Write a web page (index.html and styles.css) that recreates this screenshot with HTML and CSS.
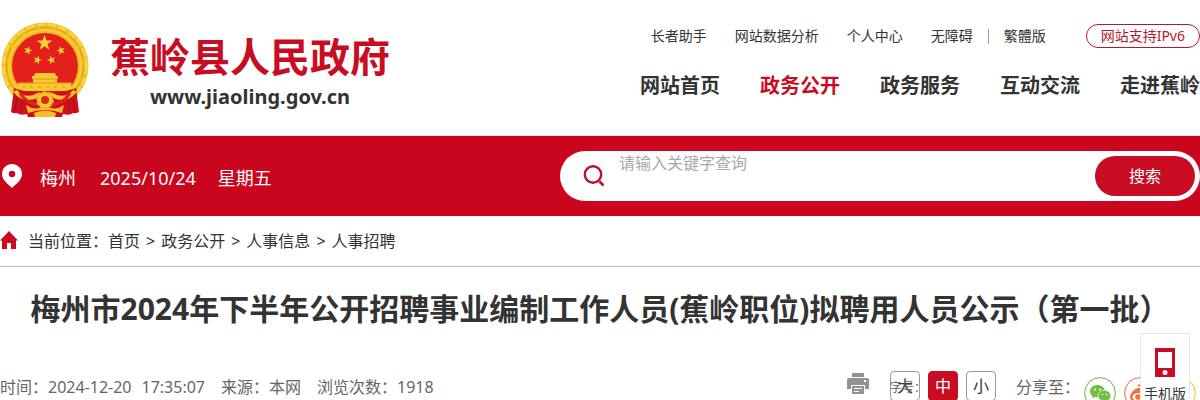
FILE: index.html
```html
<!DOCTYPE html>
<html lang="zh-CN">
<head>
<meta charset="utf-8">
<meta name="viewport" content="width=device-width, initial-scale=1">
<title>蕉岭县人民政府</title>
<link rel="stylesheet" href="styles.css">
</head>
<body>
<header class="header">
  <a class="brand" href="#">
    <svg class="emblem" viewBox="0 0 90 98" aria-hidden="true">
      <defs>
        <path id="star" d="M0-10 2.4-3.1 9.5-3.1 3.8 1.2 5.9 8.1 0 4-5.9 8.1-3.8 1.2-9.5-3.1-2.4-3.1Z"/>
      </defs>
      <circle cx="45" cy="45" r="43.500" fill="#f0bb22"/>
      <circle cx="45" cy="45" r="41.500" fill="none" stroke="#f9d743" stroke-width="2.500" stroke-dasharray="9 2"/>
      <circle cx="45" cy="45" r="36" fill="none" stroke="#f7cf35" stroke-width="2"/>
      <circle cx="45" cy="45" r="38.500" fill="none" stroke="#d99f1c" stroke-width="1" stroke-dasharray="12 4"/>
      <circle cx="45" cy="45" r="33" fill="#e3201b"/>
      <g fill="#fbd334">
        <use href="#star" transform="translate(44.500 22) scale(.82)"/>
        <use href="#star" transform="translate(28 29.500) scale(.45) rotate(15)"/>
        <use href="#star" transform="translate(61 29.500) scale(.45) rotate(-15)"/>
        <use href="#star" transform="translate(37.500 39) scale(.45) rotate(20)"/>
        <use href="#star" transform="translate(51.500 39) scale(.45) rotate(-20)"/>
      </g>
      <path d="M35 52h20l1 3h2v3h-1v4h9l5 0 2 8H16l2-8h15v-4h-1v-3h2Z" fill="#f7c832"/>
      <path d="M33 58h24M18 62h54" stroke="#dc9b1b"/>
      <path d="M22 66h46" stroke="#dc9b1b" stroke-dasharray="3 5"/>
      <path d="M14 67Q30 73 45 70Q60 73 76 67L79 91Q76 93 73 92Q70 95 63 93L62 96H28L27 93Q20 95 17 92Q14 93 11 91Z" fill="#cf111e"/>
      <path d="M15 70Q25 82 40 73M75 70Q65 82 50 73" fill="none" stroke="#f8c72e" stroke-width="4"/>
      <path d="M20 72Q28 85 45 84Q62 85 70 72" fill="none" stroke="#e3201b" stroke-width="3"/>
      <path d="M26 84Q36 91 45 84Q54 91 64 84L62 92Q45 86 28 92Z" fill="#f5bd27"/>
      <circle cx="45" cy="79" r="8" fill="#f8c72e" stroke="#e9ae24" stroke-width="2" stroke-dasharray="3 2"/>
      <circle cx="45" cy="79" r="4" fill="#db281c"/>
      <path d="M34 92Q45 87 56 92L55 96H35Z" fill="#f5bd27"/>
      <path d="M17 77 15 90M22 80 21 91M68 80 69 91M73 77 75 90" stroke="#a30d18"/>
    </svg>
    <span class="brand-text">
      <strong class="brand-name">蕉岭县人民政府</strong>
      <span class="brand-url">www.jiaoling.gov.cn</span>
    </span>
  </a>
  <div class="header-nav">
    <nav class="tools" aria-label="辅助功能">
      <a href="#">长者助手</a>
      <a href="#">网站数据分析</a>
      <a href="#">个人中心</a>
      <span class="lang"><a href="#">无障碍</a><i class="divider"></i><a href="#">繁體版</a></span>
      <a class="ipv6" href="#">网站支持IPv6</a>
    </nav>
    <nav class="menu" aria-label="主导航">
      <a href="#">网站首页</a>
      <a class="active" href="#">政务公开</a>
      <a href="#">政务服务</a>
      <a href="#">互动交流</a>
      <a href="#">走进蕉岭</a>
    </nav>
  </div>
</header>

<section class="banner">
  <div class="today">
    <svg class="pin" viewBox="0 0 20 24" aria-hidden="true"><path fill="#fff" fill-rule="evenodd" d="M10 0C4.400 0 0 4.400 0 10c0 6 5.500 9.500 10 14 4.500-4.500 10-8 10-14C20 4.400 15.600 0 10 0Zm0 6.800a3.200 3.200 0 1 1 0 6.400 3.200 3.200 0 0 1 0-6.400Z"/></svg>
    <span class="city">梅州</span>
    <span class="date">2025/10/24</span>
    <span>星期五</span>
  </div>
  <form class="search">
    <svg class="lens" viewBox="0 0 22 22" aria-hidden="true"><circle cx="10" cy="9.500" r="8.200" fill="none" stroke="#b9162b" stroke-width="2.400"/><path d="m16.500 16.500 4 4" stroke="#b9162b" stroke-width="2.600"/></svg>
    <input class="search-box" type="text" aria-label="搜索" placeholder="请输入关键字查询">
    <button class="search-button" type="button">搜索</button>
  </form>
</section>

<nav class="crumbs" aria-label="当前位置">
  <svg class="home" viewBox="0 0 18 18" aria-hidden="true"><path fill="#c80d23" d="M9 0 18 9.500h-2V18h-5v-6H7v6H2V9.500H0Z"/></svg>
  <span class="trail">当前位置：<a href="#">首页</a><span class="arrow">&gt;</span><a href="#">政务公开</a><span class="arrow">&gt;</span><a href="#">人事信息</a><span class="arrow">&gt;</span><a href="#">人事招聘</a></span>
</nav>

<main class="article">
  <h1 class="title">梅州市2024年下半年公开招聘事业编制工作人员(蕉岭职位)拟聘用人员公示（第一批）</h1>
  <div class="meta">
    <div class="facts">
      <span class="published"><span>时间：2024-12-20</span><span>17:35:07</span></span>
      <span>来源：本网</span>
      <span>浏览次数：1918</span>
    </div>
    <div class="actions">
      <button class="print" type="button" aria-label="打印">
        <svg viewBox="0 0 22 21" aria-hidden="true"><path fill="#929292" fill-rule="evenodd" d="M5 0h12v4H5ZM2 5h18a2 2 0 0 1 2 2v9h-4v-4H4v4H0V7a2 2 0 0 1 2-2Zm15 2v2h2V7ZM5 13h12v8H5Zm2 2v1h8v-1Zm0 3v1h5v-1Z"/></svg>
      </button>
      <div class="sizes">
        <span class="sizes-label">字号：</span>
        <button class="size" type="button">大</button>
        <button class="size selected" type="button">中</button>
        <button class="size" type="button">小</button>
      </div>
      <div class="share">
        <span class="share-label">分享至：</span>
        <div class="share-links">
          <a href="#" aria-label="微信"><svg viewBox="0 0 32 32"><circle cx="16" cy="16" r="15.400" fill="#fff" stroke="#6cb43f"/><g fill="#72bf44"><path d="M13.500 8C9 8 6 10.800 6 14.200c0 2.100 1 3.700 2.700 4.900L8 21.300l2.800-1.300c1 .3 2 .4 3 .4 0-4 3.200-6.800 7.200-6.800C20.200 10.200 17.300 8 13.500 8Z"/><path stroke="#fff" stroke-width=".6" d="M20.500 13.300c-3.800 0-6.500 2.500-6.500 5.500s2.700 5.400 6.500 5.400c.8 0 1.500-.1 2.200-.3l2.500 1.200-.7-2c1.500-1 2.300-2.500 2.300-4.300 0-3-2.800-5.500-6.300-5.500Z"/></g><g fill="#fff"><circle cx="11" cy="12.500" r="1"/><circle cx="16" cy="12.500" r="1"/><circle cx="18.500" cy="17.500" r=".8"/><circle cx="22.500" cy="17.500" r=".8"/></g></svg></a>
          <a href="#" aria-label="微博"><svg viewBox="0 0 32 32"><circle cx="16" cy="16" r="15.400" fill="#fff" stroke="#f2703c"/><path fill="#f2703c" d="M14 11c-4 1-8 5.500-8 9 0 3.500 4 5.500 9 5.500s9-3 9-6c0-2-1.500-3-3-3.500 1-3-1-4-5-2.500 1-2 0-3-2-2.500Z"/><ellipse cx="14.500" cy="20" rx="6" ry="4" fill="#fff"/><circle cx="14" cy="20" r="2.800" fill="#f2703c"/><path d="M14 9c5-3 11 0 11 6" fill="none" stroke="#f2703c" stroke-width="2"/></svg></a>
          <a href="#" aria-label="QQ空间"><svg viewBox="0 0 32 32"><circle cx="16" cy="16" r="15.400" fill="#fff" stroke="#f5b52e"/><path fill="#f5b52e" d="m16 7 2.700 6 6.300.6-4.800 4.300 1.400 6.300L16 21l-5.600 3.200 1.400-6.300L7 13.600l6.300-.6Z"/></svg></a>
        </div>
      </div>
    </div>
  </div>
</main>

<a class="mobile" href="#">
  <svg class="phone" viewBox="0 0 20 29" aria-hidden="true"><path fill="#c80d23" fill-rule="evenodd" d="M0 0h20v29H0ZM3 4v16h14V4Zm7 18a2.500 2.500 0 1 0 0 5 2.500 2.500 0 0 0 0-5Z"/></svg>
  <span>手机版</span>
</a>
</body>
</html>
```
FILE: styles.css
```css
* {
  box-sizing: border-box;
}

body {
  margin: 0;
  overflow-x: hidden;
  background: #fff;
  color: #333;
  font: 16px/24px "Noto Sans", "Noto Sans CJK SC", sans-serif;
}

a {
  color: inherit;
  text-decoration: none;
}

button {
  margin: 0;
  padding: 0;
  border: 0;
  background: none;
  font: inherit;
}

svg {
  display: block;
}

.header {
  display: flex;
  justify-content: space-between;
  height: 136px;
  border-bottom: 1px solid #fbe9ea;
}

.brand {
  display: flex;
  gap: 20px;
  padding-top: 21px;
}

.emblem {
  width: 90px;
  height: 98px;
}

.brand-text {
  display: flex;
  flex-direction: column;
  align-items: center;
  padding-top: 12px;
}

.brand-name {
  color: #c80d23;
  font-size: 40px;
  line-height: 48px;
}

.brand-url {
  font-size: 20px;
  font-weight: 700;
  line-height: 32px;
}

.header-nav {
  display: flex;
  flex-direction: column;
  align-items: flex-end;
  gap: 24px;
  padding-top: 24px;
}

.tools {
  display: flex;
  align-items: center;
  gap: 28px;
  font-size: 14px;
}

.lang {
  display: flex;
  align-items: center;
  gap: 15px;
}

.divider {
  width: 1px;
  height: 15px;
  background: #999;
}

.ipv6 {
  margin-left: 12px;
  padding: 0 14px;
  border: 1px solid #b9162b;
  border-radius: 12px;
  color: #b9162b;
  line-height: 22px;
}

.menu {
  display: flex;
  gap: 40px;
  font-size: 20px;
  font-weight: 700;
  line-height: 28px;
}

.active {
  color: #c80d23;
}

.banner {
  display: flex;
  align-items: center;
  justify-content: space-between;
  height: 80px;
  background: #c9061d;
}

.today {
  display: flex;
  align-items: center;
  padding: 4px 0 0 2px;
  color: #fff;
  font-size: 18px;
}

.pin {
  width: 20px;
  height: 24px;
  margin: 0 18px 4px 0;
}

.city {
  margin-right: 24px;
}

.date {
  margin-right: 22px;
}

.search {
  display: flex;
  align-items: center;
  width: 640px;
  height: 50px;
  padding: 0 5px 0 23px;
  border-radius: 25px;
  background: #fff;
}

.lens {
  width: 22px;
  height: 22px;
}

.search-box {
  flex: 1;
  align-self: flex-start;
  min-width: 0;
  height: 24px;
  margin: 0 14px;
  padding: 0;
  border: 0;
  outline: 0;
  font: inherit;
}

.search-box::placeholder {
  color: #a9a9a9;
}

.search-button {
  width: 100px;
  height: 40px;
  border-radius: 20px;
  background: #c80d23;
  color: #fff;
}

.crumbs {
  display: flex;
  align-items: center;
  gap: 10px;
  height: 51px;
  border-bottom: 1px solid #bbb;
}

.home {
  width: 18px;
  height: 18px;
  margin-bottom: 2px;
}

.arrow {
  margin: 0 6px;
}

.article {
  padding-top: 20px;
}

.title {
  margin: 0;
  font-size: 30px;
  line-height: 44px;
  text-align: center;
}

.meta {
  display: flex;
  align-items: flex-start;
  justify-content: space-between;
  padding-top: 40px;
  color: #666;
}

.facts {
  display: flex;
  gap: 16px;
  padding-top: 4px;
}

.published {
  display: flex;
  gap: 10px;
}

.actions {
  display: flex;
  padding-right: 4px;
}

.print {
  width: 22px;
  height: 21px;
  margin: 2px 21px 0 0;
}

.sizes {
  position: relative;
  display: flex;
  gap: 8px;
}

.sizes-label {
  position: absolute;
  top: 5px;
  left: 0;
  font-size: 12px;
  white-space: nowrap;
}

.size {
  width: 30px;
  height: 30px;
  border: 1px solid #999;
  border-radius: 4px;
  color: #333;
}

.selected {
  border-color: #c80d23;
  background: #c80d23;
  color: #fff;
}

.share {
  display: flex;
  gap: 4px;
  padding: 4px 0 0 20px;
}

.share-links {
  display: flex;
  gap: 8px;
  padding-top: 2px;
}

.share svg {
  width: 32px;
  height: 32px;
}

.mobile {
  position: fixed;
  right: 10px;
  bottom: -8px;
  display: flex;
  flex-direction: column;
  align-items: center;
  gap: 5px;
  width: 50px;
  height: 75px;
  padding-top: 14px;
  border: 1px solid #e6e6e6;
  background: #fff;
  font-size: 14px;
}

.phone {
  width: 20px;
  height: 29px;
}
```
